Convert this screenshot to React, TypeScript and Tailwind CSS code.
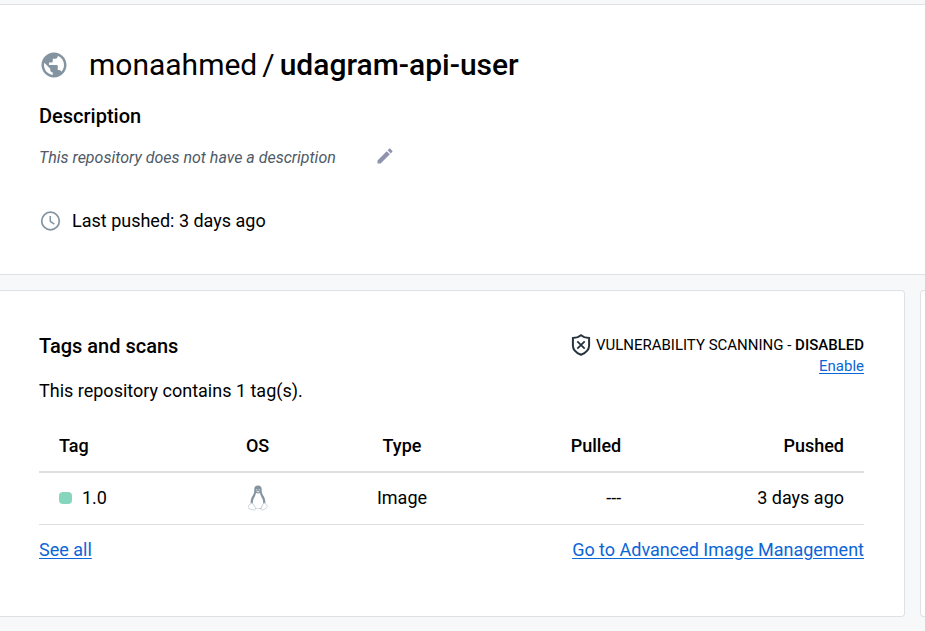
import React from "react";

function GlobeIcon() {
  return (
    <svg viewBox="0 0 24 24" className="h-[30px] w-[30px] shrink-0 fill-[#8394a0]" aria-hidden="true">
      <path d="M12 2C6.48 2 2 6.48 2 12s4.48 10 10 10 10-4.48 10-10S17.52 2 12 2zm-1 17.93c-3.95-.49-7-3.85-7-7.93 0-.62.08-1.21.21-1.79L9 15v1c0 1.1.9 2 2 2v1.93zm6.9-2.54c-.26-.81-1-1.39-1.9-1.39h-1v-3c0-.55-.45-1-1-1H8v-2h2c.55 0 1-.45 1-1V7h2c1.1 0 2-.9 2-2v-.41c2.93 1.19 5 4.06 5 7.41 0 2.08-.8 3.97-2.1 5.39z" />
    </svg>
  );
}

function PencilIcon() {
  return (
    <svg viewBox="0 0 24 24" className="h-5 w-5 fill-[#8f93ae]" aria-hidden="true">
      <path d="M3 17.25V21h3.75L17.81 9.94l-3.75-3.75L3 17.25zM20.71 7.04c.39-.39.39-1.02 0-1.41l-2.34-2.34c-.39-.39-1.02-.39-1.41 0l-1.83 1.83 3.75 3.75 1.83-1.83z" />
    </svg>
  );
}

function ClockIcon() {
  return (
    <svg viewBox="0 0 22 22" className="h-[22px] w-[22px] shrink-0 fill-none stroke-[#8394a0]" aria-hidden="true">
      <circle cx="11.5" cy="11" r="8.8" strokeWidth="1.7" />
      <path d="M11.3 6v5.400l4 2.800" strokeWidth="1.5" />
    </svg>
  );
}

function ShieldIcon() {
  return (
    <svg viewBox="0 0 20 22" className="h-[22px] w-5 shrink-0 fill-none stroke-[#27343f]" aria-hidden="true">
      <path d="M10 1.200C8 2.900 5 4 1.900 4.100v7.400c0 4.300 4 7.700 8.100 9.300 4.100-1.600 8.100-5 8.100-9.300V4.100C15 4 12 2.900 10 1.200z" strokeWidth="2" />
      <path d="M6.300 7.300l7.400 7.400M13.700 7.300l-7.400 7.400" strokeWidth="1.800" />
    </svg>
  );
}

function LinuxIcon() {
  return (
    <svg viewBox="0 0 20 26" className="inline-block h-[26px] w-5" role="img" aria-label="Linux">
      <path d="M10 .6C7.400.6 6.200 2.400 6.300 4.600c.1 2.800-.3 3.900-1.500 5.900C3.200 13 2.400 15.500 2.700 18.500l3.500 5.200h7.600l3.500-5.200c.3-3-.5-5.500-2.100-8-1.200-2-1.600-3.100-1.500-5.900C13.800 2.400 12.600.6 10 .6z" fill="#8394a0" />
      <path d="M8 7.700c.9 1 3.100 1 4 0 .4 2.500 1.300 3.800 2.300 5.800.9 1.900 1.100 4 .7 5.700l-1.900 3.600c-1.800 1.400-4.400 1.400-6.200 0L5 19.200c-.4-1.700-.2-3.800.7-5.700C6.700 11.500 7.600 10.200 8 7.700z" fill="#fff" />
      <path d="M8.200 6.600c.8-.9 2.800-.9 3.600 0-.8 1.100-2.800 1.100-3.600 0z" fill="#e4e9ec" />
      <circle cx="8.800" cy="4.800" r=".6" fill="#fff" />
      <circle cx="11.200" cy="4.800" r=".6" fill="#fff" />
      <path d="M3.300 18l1.500.5 2.700 4.300c.4 1.500-.6 2.500-2.100 2.200L.7 23.500c-.6-.4 0-1.500-.2-2.600 0-.9.600-1 1.500-1.200L3.300 18zM16.700 18l-1.500.7c-.9 1-1.800 3.700-2.100 5.100.1 1.400 1.700 1.600 2.700.8l3.300-2.200c.8-.6.400-1.200-.3-1.800-.5-.5 0-1-.7-1.400L16.700 18z" fill="#fff" stroke="#c3cbd1" strokeWidth=".8" />
    </svg>
  );
}

const linkClass = "text-[#0b66d8] underline underline-offset-2";

export default function App() {
  return (
    <div className="min-h-screen bg-[#f7f8fa] pt-1 font-[Roboto,'Liberation_Sans',sans-serif] text-lg leading-6 text-black">
      <header className="border-y border-[#dfe1e6] bg-white px-[39px] pt-10 pb-[41px]">
        <div className="flex items-center gap-5">
          <GlobeIcon />
          <h1 className="flex gap-[5px] text-[30px] leading-10">
            <span>monaahmed</span>
            <span>/</span>
            <span className="font-medium">udagram-api-user</span>
          </h1>
        </div>
        <h2 className="mt-[19px] text-xl leading-6 font-medium">Description</h2>
        <div className="mt-[18px] flex items-start gap-[39px]">
          <p className="text-base leading-6 text-[#4e5a66] italic">This repository does not have a description</p>
          <button type="button" aria-label="Edit description">
            <PencilIcon />
          </button>
        </div>
        <div className="mt-[39px] flex items-center gap-[11px]">
          <ClockIcon />
          <p>Last pushed: 3 days ago</p>
        </div>
      </header>

      <div className="flex gap-[15px] pt-[15px] pb-[15px]">
        <main className="flex-1 rounded-r-sm border border-l-0 border-[#dfe1e6] bg-white pt-[43px] pr-10 pb-[54px] pl-[39px]">
          <div className="flex items-start justify-between">
            <h2 className="text-xl leading-6 font-medium">Tags and scans</h2>
            <div className="text-right text-[15px] leading-5">
              <div className="flex items-center gap-[5px]">
                <ShieldIcon />
                <p>
                  VULNERABILITY SCANNING - <span className="font-medium">DISABLED</span>
                </p>
              </div>
              <a href="#enable" className={linkClass}>Enable</a>
            </div>
          </div>
          <p className="mt-[3px]">This repository contains 1 tag(s).</p>

          <table className="mt-4 w-full table-fixed">
            <thead>
              <tr className="h-[53px] border-b-2 border-[#dedede]">
                <th className="w-[18%] px-5 pt-0.5 text-left font-medium">Tag</th>
                <th className="w-[17%] px-5 pt-0.5 text-center font-medium">OS</th>
                <th className="w-[18%] px-5 pt-0.5 text-center font-medium">Type</th>
                <th className="w-[20%] px-5 pt-0.5 text-right font-medium">Pulled</th>
                <th className="w-[27%] px-5 pt-0.5 text-right font-medium">Pushed</th>
              </tr>
            </thead>
            <tbody>
              <tr className="h-[52px] border-b border-[#dedede]">
                <td className="px-5">
                  <div className="flex items-center gap-[10px]">
                    <span className="h-3 w-[13px] rounded bg-[#86d6bd]" />
                    1.0
                  </div>
                </td>
                <td className="px-5 text-center leading-none">
                  <LinuxIcon />
                </td>
                <td className="px-5 text-center">Image</td>
                <td className="px-5 text-right">---</td>
                <td className="px-5 text-right">3 days ago</td>
              </tr>
            </tbody>
          </table>

          <nav className="mt-[13px] flex justify-between">
            <a href="#tags" className={linkClass}>See all</a>
            <a href="#images" className={linkClass}>Go to Advanced Image Management</a>
          </nav>
        </main>
        <aside className="w-[5px] rounded-l-sm border-y border-l border-[#dfe1e6] bg-white" />
      </div>
    </div>
  );
}
